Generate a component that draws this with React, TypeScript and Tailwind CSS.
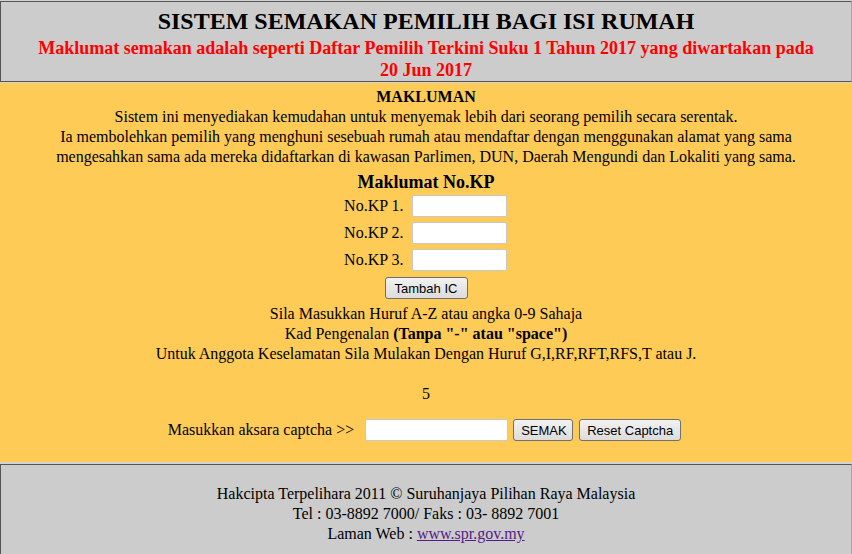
import React from 'react';

const serif = { fontFamily: '"Liberation Serif", "Times New Roman", serif' };

const Btn: React.FC<{ label: string; className?: string }> = ({ label, className = '' }) => (
  <button
    className={`h-[22px] px-[7px] border border-[#707070] rounded-[3px] bg-gradient-to-b from-[#f2f2f2] to-[#dcdcdc] text-[13px] leading-none text-black font-['Liberation_Sans',Arial,sans-serif] ${className}`}
  >
    {label}
  </button>
);

const KpRow: React.FC<{ n: number }> = ({ n }) => (
  <div className="flex items-center justify-center h-[27px]">
    <span className="w-[70px] text-right pr-[8px] ml-[-4px]">No.KP {n}.</span>
    <input className="w-[95px] h-[22px] bg-white border border-[#c8c8c8] rounded-[2px] outline-none" />
  </div>
);

export default function App() {
  return (
    <div className="w-[852px] h-[554px] overflow-hidden bg-white text-black text-[16px]" style={serif}>
      <div className="h-[1px] bg-[#d4d4d4]" />
      {/* header */}
      <div className="h-[81px] bg-[#cccccc] border border-[#555] border-r-[#a8a8a8] border-b-[#555] text-center">
        <h1 className="text-[24px] font-bold leading-[28px] pt-[5px]">SISTEM SEMAKAN PEMILIH BAGI ISI RUMAH</h1>
        <p className="text-[18px] font-bold text-[#ff0000] leading-[22px] mt-[2px] px-[30px]">
          Maklumat semakan adalah seperti Daftar Pemilih Terkini Suku 1 Tahun 2017 yang diwartakan pada 20 Jun 2017
        </p>
      </div>
      <div className="h-[1px] bg-[#d4d4d4]" />

      {/* main */}
      <div className="h-[379px] bg-[#fecb57] text-center leading-[20px] pt-[4px]">
        <div className="font-bold">MAKLUMAN</div>
        <div>Sistem ini menyediakan kemudahan untuk menyemak lebih dari seorang pemilih secara serentak.</div>
        <div>Ia membolehkan pemilih yang menghuni sesebuah rumah atau mendaftar dengan menggunakan alamat yang sama</div>
        <div>mengesahkan sama ada mereka didaftarkan di kawasan Parlimen, DUN, Daerah Mengundi dan Lokaliti yang sama.</div>

        <div className="text-[18px] font-bold mt-[4px] leading-[22px]">Maklumat No.KP</div>
        <div className="mt-[-1px]">
          <KpRow n={1} />
          <KpRow n={2} />
          <KpRow n={3} />
        </div>
        <div className="mt-[4px] flex justify-center">
          <Btn label="Tambah IC" className="w-[83px]" />
        </div>

        <div className="mt-[5px]">Sila Masukkan Huruf A-Z atau angka 0-9 Sahaja</div>
        <div>
          Kad Pengenalan <span className="font-bold">(Tanpa "-" atau "space")</span>
        </div>
        <div>Untuk Anggota Keselamatan Sila Mulakan Dengan Huruf G,I,RF,RFT,RFS,T atau J.</div>
        <div className="h-[20px]" />
        <div>5</div>

        <div className="mt-[15px] flex items-center justify-center">
          <span className="mr-[11px] ml-[-3px]">Masukkan aksara captcha &gt;&gt;</span>
          <input className="w-[143px] h-[22px] bg-white border border-[#c8c8c8] rounded-[2px] outline-none" />
          <Btn label="SEMAK" className="ml-[5px] w-[60px]" />
          <Btn label="Reset Captcha" className="ml-[6px] w-[102px]" />
        </div>
      </div>

      <div className="h-[2px] bg-[#d4d4d4]" />
      {/* footer */}
      <div className="h-[100px] bg-[#cccccc] border-l border-t border-[#555] border-r border-r-[#a8a8a8] text-center leading-[20px] pt-[19px]">
        <div>Hakcipta Terpelihara 2011 © Suruhanjaya Pilihan Raya Malaysia</div>
        <div>Tel : 03-8892 7000/ Faks : 03- 8892 7001</div>
        <div>
          Laman Web : <a href="#" className="text-[#551a8b] underline">www.spr.gov.my</a>
        </div>
      </div>
    </div>
  );
}
